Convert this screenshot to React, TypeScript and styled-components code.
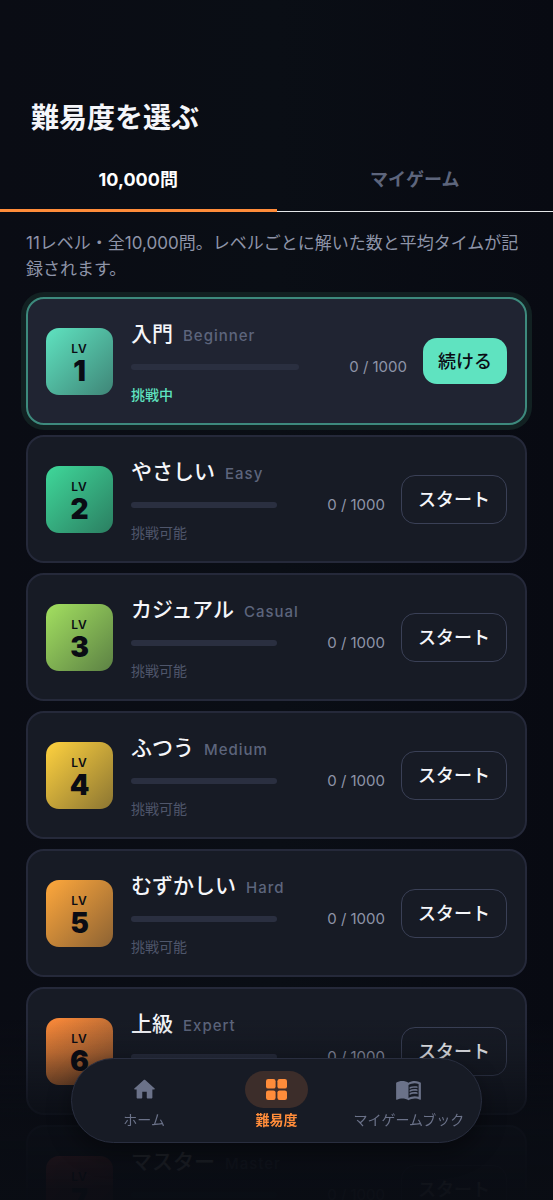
import React, { useState } from 'react';
import styled, { createGlobalStyle } from 'styled-components';
import { MdMenuBook } from 'react-icons/md';

const GlobalStyle = createGlobalStyle`
  *, *::before, *::after { box-sizing: border-box; }
  body {
    margin: 0;
    background: #0a0d14;
    color: #f5f6fa;
    font-family: Inter, "Noto Sans CJK JP", sans-serif;
    -webkit-font-smoothing: antialiased;
  }
  button { font-family: inherit; cursor: pointer; }
`;

const Screen = styled.div`
  height: 100vh;
  display: flex;
  flex-direction: column;
  background: linear-gradient(90deg, #0a0c14, #0a0e15 50%, #080a12);
`;

const Header = styled.header`
  padding: 98px 31px 0;
`;

const Title = styled.h1`
  margin: 0;
  font-size: 28px;
  line-height: 40px;
  font-weight: 700;
`;

const Tabs = styled.div`
  display: flex;
  margin-top: 10px;
  flex-shrink: 0;
`;

const Tab = styled.button<{ $active: boolean }>`
  flex: 1;
  height: 64px;
  padding: 0 0 4px;
  border: 0;
  background: none;
  box-shadow: inset 0 ${(p) => (p.$active ? '-3px #ff8c3a' : '-1px #e4e6e8')};
  color: ${(p) => (p.$active ? '#ffffff' : '#5d657c')};
  font-size: 18px;
  font-weight: 700;
`;

const Content = styled.main`
  flex: 1;
  min-height: 0;
  overflow-y: auto;
  scrollbar-width: none;
  padding: 18px 26px 0;
`;

const Intro = styled.p`
  margin: 0 0 15px;
  color: #8e94a8;
  font-size: 17px;
  line-height: 26px;
`;

const LevelList = styled.ul`
  margin: 0;
  padding: 0 0 160px;
  list-style: none;
  display: flex;
  flex-direction: column;
  gap: 10px;
`;

const Card = styled.li<{ $current: boolean }>`
  display: flex;
  align-items: center;
  gap: 16px;
  height: 128px;
  flex-shrink: 0;
  padding: 0 18px;
  border: 2px solid ${(p) => (p.$current ? '#3d8a7d' : '#25293a')};
  border-radius: 18px;
  background: ${(p) => (p.$current ? '#202432' : '#171b25')};
  box-shadow: ${(p) => (p.$current ? '0 0 0 5px #122122' : 'none')};
`;

const Badge = styled.div<{ $from: string; $to: string }>`
  width: 67px;
  height: 67px;
  flex-shrink: 0;
  display: flex;
  flex-direction: column;
  align-items: center;
  justify-content: center;
  padding-top: 5px;
  border-radius: 13px;
  background: linear-gradient(135deg, ${(p) => p.$from}, ${(p) => p.$to});
  color: #0a0c14;
`;

const BadgeLabel = styled.span`
  font-size: 12px;
  line-height: 14px;
  font-weight: 600;
  letter-spacing: 1px;
`;

const BadgeNumber = styled.span`
  font-size: 28px;
  line-height: 30px;
  font-weight: 900;
`;

const Info = styled.div`
  flex: 1;
  min-width: 0;
  margin-left: 2px;
  padding-top: 3px;
`;

const NameRow = styled.div`
  display: flex;
  align-items: baseline;
  gap: 10px;
  height: 30px;
  line-height: 28px;
`;

const Name = styled.h2`
  margin: 0;
  font-size: 21px;
  font-weight: 500;
`;

const EnglishName = styled.span`
  color: #5d657c;
  font-size: 15px;
  font-weight: 500;
  letter-spacing: 1px;
`;

const ProgressRow = styled.div`
  display: flex;
  align-items: center;
  height: 20px;
  margin: 7px 0;
`;

const Track = styled.div`
  flex: 1;
  height: 6px;
  border-radius: 3px;
  background: #2a2f40;
`;

const Count = styled.span`
  width: 108px;
  text-align: right;
  color: #8e94a8;
  font-size: 15px;
`;

const Status = styled.div<{ $current: boolean }>`
  color: ${(p) => (p.$current ? '#5fe3c0' : '#4f566b')};
  font-size: 14px;
  line-height: 22px;
  font-weight: ${(p) => (p.$current ? 500 : 400)};
`;

const ActionButton = styled.button<{ $primary: boolean }>`
  flex-shrink: 0;
  height: ${(p) => (p.$primary ? 46 : 49)}px;
  padding: 0 ${(p) => (p.$primary ? 15 : 16)}px 2px;
  border: ${(p) => (p.$primary ? '0' : '1px solid #3a4056')};
  border-radius: 14px;
  background: ${(p) => (p.$primary ? '#5fe3c0' : 'transparent')};
  color: ${(p) => (p.$primary ? '#0a0c14' : '#f5f6fa')};
  font-size: 18px;
  font-weight: 500;
`;

const BottomFade = styled.div`
  position: fixed;
  left: 0;
  right: 0;
  bottom: 0;
  height: 180px;
  pointer-events: none;
  background: linear-gradient(
    rgba(10, 13, 20, 0),
    rgba(10, 13, 20, 0.18) 18%,
    rgba(10, 13, 20, 0.5) 36%,
    rgba(10, 13, 20, 0.86) 54%,
    rgba(10, 13, 20, 0.94) 78%,
    rgba(10, 13, 20, 0.98) 94%
  );
`;

const BottomNav = styled.nav`
  position: fixed;
  left: 71px;
  right: 71px;
  bottom: 57px;
  height: 85px;
  display: flex;
  padding: 0 6px;
  border: 1px solid #292e3f;
  border-radius: 43px;
  background: #171b25;
  box-shadow: 0 10px 24px rgba(0, 0, 0, 0.4);
`;

const NavItem = styled.a<{ $active: boolean }>`
  flex: 1;
  display: flex;
  flex-direction: column;
  align-items: center;
  padding-top: 12px;
  color: ${(p) => (p.$active ? '#ff8c3a' : '#6b7289')};
  font-size: 14px;
  line-height: 24px;
  font-weight: ${(p) => (p.$active ? 700 : 400)};
  white-space: nowrap;
  text-decoration: none;
`;

const NavPill = styled.span<{ $active: boolean }>`
  width: 63px;
  height: 37px;
  display: flex;
  align-items: center;
  justify-content: center;
  border-radius: 19px;
  background: ${(p) => (p.$active ? '#3c2d2a' : 'transparent')};
`;

const HomeIcon = () => (
  <svg width="27" height="27" viewBox="0 0 24 24" fill="currentColor" aria-hidden="true">
    <path d="M10 19v-5h4v5c0 .55.45 1 1 1h3c.55 0 1-.45 1-1v-7h1.7c.46 0 .68-.57.33-.87L12.67 3.6c-.38-.34-.96-.34-1.34 0l-8.36 7.53c-.34.3-.13.87.33.87H5v7c0 .55.45 1 1 1h3c.55 0 1-.45 1-1z" />
  </svg>
);

const GridIcon = () => (
  <svg width="21" height="21" viewBox="0 0 21 21" fill="currentColor" aria-hidden="true">
    <rect x="0" y="0" width="9.6" height="9.6" rx="2.2" />
    <rect x="11.4" y="0" width="9.6" height="9.6" rx="2.2" />
    <rect x="0" y="11.4" width="9.6" height="9.6" rx="2.2" />
    <rect x="11.4" y="11.4" width="9.6" height="9.6" rx="2.2" />
  </svg>
);

const levels = [
  { name: '入門', en: 'Beginner', from: '#5fe3c0', to: '#3f8577' },
  { name: 'やさしい', en: 'Easy', from: '#3fd89a', to: '#2b7e61' },
  { name: 'カジュアル', en: 'Casual', from: '#a3e060', to: '#5c8144' },
  { name: 'ふつう', en: 'Medium', from: '#ffd23f', to: '#8b7532' },
  { name: 'むずかしい', en: 'Hard', from: '#ffa83c', to: '#8c6233' },
  { name: '上級', en: 'Expert', from: '#ff8c3a', to: '#8c5530' },
  { name: 'マスター', en: 'Master', from: '#ff5a5a', to: '#8c3a3e' },
];

const tabs = ['10,000問', 'マイゲーム'];

export default function App() {
  const [tab, setTab] = useState(0);
  return (
    <>
      <GlobalStyle />
      <Screen>
        <Header>
          <Title>難易度を選ぶ</Title>
        </Header>
        <Tabs role="tablist">
          {tabs.map((label, i) => (
            <Tab key={label} type="button" role="tab" aria-selected={tab === i} $active={tab === i} onClick={() => setTab(i)}>
              {label}
            </Tab>
          ))}
        </Tabs>
        <Content>
          <Intro>11レベル・全10,000問。レベルごとに解いた数と平均タイムが記録されます。</Intro>
          <LevelList>
            {levels.map((level, i) => {
              const current = i === 0;
              return (
                <Card key={level.en} $current={current}>
                  <Badge $from={level.from} $to={level.to}>
                    <BadgeLabel>LV</BadgeLabel>
                    <BadgeNumber>{i + 1}</BadgeNumber>
                  </Badge>
                  <Info>
                    <NameRow>
                      <Name>{level.name}</Name>
                      <EnglishName>{level.en}</EnglishName>
                    </NameRow>
                    <ProgressRow>
                      <Track />
                      <Count>0 / 1000</Count>
                    </ProgressRow>
                    <Status $current={current}>{current ? '挑戦中' : '挑戦可能'}</Status>
                  </Info>
                  <ActionButton type="button" $primary={current}>
                    {current ? '続ける' : 'スタート'}
                  </ActionButton>
                </Card>
              );
            })}
          </LevelList>
        </Content>
      </Screen>
      <BottomFade />
      <BottomNav>
        <NavItem href="#home" $active={false}>
          <NavPill $active={false}><HomeIcon /></NavPill>
          ホーム
        </NavItem>
        <NavItem href="#levels" $active aria-current="page">
          <NavPill $active><GridIcon /></NavPill>
          難易度
        </NavItem>
        <NavItem href="#gamebook" $active={false}>
          <NavPill $active={false}><MdMenuBook size={27} /></NavPill>
          マイゲームブック
        </NavItem>
      </BottomNav>
    </>
  );
}
